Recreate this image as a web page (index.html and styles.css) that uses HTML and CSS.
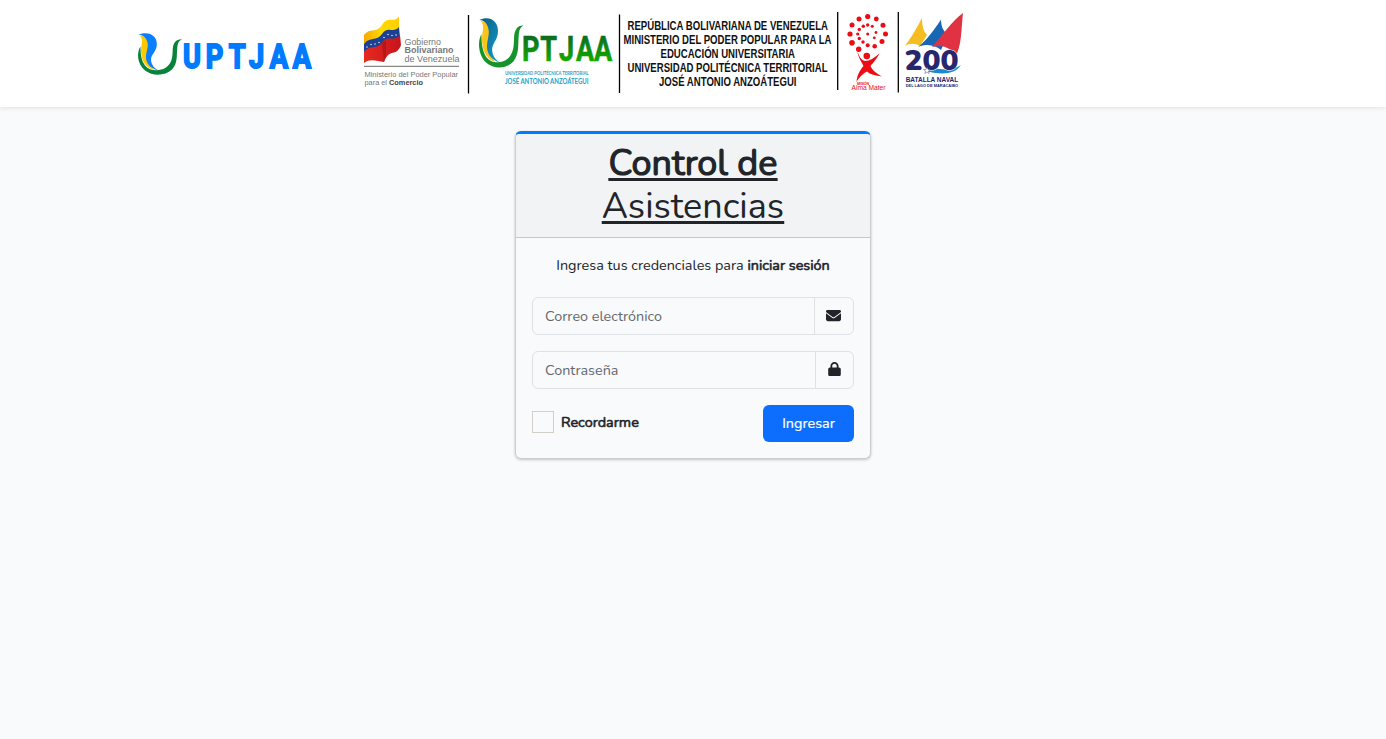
FILE: index.html
```
<!DOCTYPE html>
<html lang="es">
<head>
<meta charset="utf-8">
<title>Control de Asistencias</title>
<link rel="stylesheet" href="styles.css">
</head>
<body>
<header class="topbar">
  <svg class="brand" viewBox="136 30 180 50" role="img" aria-label="UPTJAA">
    <defs>
      <g id="swoosh">
        <path class="swoosh-leaf" d="M140.500 46.500C136.500 52 137 64 145 70.500C153 76.500 165 76 172 69.500C178 63 176.500 55 177.200 49C177.700 43 178.500 41 182 39.300C176 39 173.200 43 172.700 49C172.500 58 172 63 166 67.500C160 71.500 150 71.500 145 65.500C141 60 140.500 53 140.500 46.500Z"/>
        <path class="swoosh-sun" d="M139.500 35.500C145 39 139.500 47 141.500 55C142.500 63 147 68 154 70C148 63 147 58 148 52C150 43 148 36 139.500 35.500Z"/>
        <path class="swoosh-water" d="M138.300 34.800C149 30.500 157.500 36 156.800 45C156.300 52 151 54 151 60C151.500 65 154 68 158.500 70.500C149 68 145.500 62 146 56C146.500 50 149 46 147 41C145.500 37 142 34.500 138.300 34.800Z"/>
      </g>
    </defs>
    <use href="#swoosh" class="mark"/>
    <text class="brand-text" transform="scale(.8 1)" x="228.900 257.300 286 311.300 337.300 365.800" y="68">UPTJAA</text>
  </svg>
  <svg class="banner" viewBox="362 8 606 90" role="img" aria-label="Instituciones">
    <defs>
      <linearGradient id="gy" x1="0" x2="1"><stop offset="0" stop-color="#f6a800"/><stop offset=".5" stop-color="#ffd900"/><stop offset="1" stop-color="#ffcf00"/></linearGradient>
      <linearGradient id="gr" x1="0" x2="1"><stop offset="0" stop-color="#e52a20"/><stop offset="1" stop-color="#c8131b"/></linearGradient>
      <linearGradient id="gg" gradientUnits="userSpaceOnUse" x1="0" x2="0" y1="35" y2="61"><stop offset="0" stop-color="#0b6b22"/><stop offset="1" stop-color="#12a800"/></linearGradient>
      <linearGradient id="gw" x1="0" x2="1" y1="0" y2="1"><stop offset="0" stop-color="#0b5a80"/><stop offset="1" stop-color="#14a0d0"/></linearGradient>
    </defs>
    <!-- Gobierno Bolivariano -->
    <path fill="url(#gy)" d="M364 35C370 27 376 34 382 25C388 15 393 24 399 16.500V29C392 37 388 27 382 37C376 45 370 38 364 45Z"/>
    <path fill="#1b4194" d="M364 44C370 36 376 42 382 34C388 25 393 34 399 27L400 37C393 46 388 36 382 46C376 53 370 45 364 53Z"/>
    <path fill="url(#gr)" d="M364 52C370 44 376 50 382 43C388 34 393 43 400 35L401 45C396 58 390 47 384 62C377 61 370 58 364 63Z"/>
    <path fill="#98151b" d="M382 43L386 40V56L384 62Z" opacity=".6"/>
    <g fill="#fff"><circle cx="367" cy="47" r=".7"/><circle cx="371" cy="44.500" r=".7"/><circle cx="375" cy="44" r=".7"/><circle cx="379" cy="42.500" r=".7"/><circle cx="384" cy="37.500" r=".7"/><circle cx="388" cy="34.500" r=".7"/><circle cx="392" cy="35.500" r=".7"/><circle cx="396" cy="35" r=".7"/></g>
    <g class="gov">
      <text x="404.500" y="45" font-size="9.500" textLength="36.500" lengthAdjust="spacingAndGlyphs">Gobierno</text>
      <text x="404.500" y="53.300" font-size="9.500" font-weight="700" textLength="49" lengthAdjust="spacingAndGlyphs">Bolivariano</text>
      <text x="404.500" y="62" font-size="9.500" textLength="55" lengthAdjust="spacingAndGlyphs">de Venezuela</text>
      <text x="364.500" y="76.500" font-size="8" textLength="93.500" lengthAdjust="spacingAndGlyphs">Ministerio del Poder Popular</text>
      <text x="364.500" y="85" font-size="8" textLength="58.500" lengthAdjust="spacingAndGlyphs">para el <tspan font-weight="700" fill="#444">Comercio</tspan></text>
    </g>
    <path stroke="#888" stroke-width="1.200" d="M364 66.400H459"/>
    <path class="divider" d="M468.500 15V93.500M619.500 14.500V93M837.700 12V90M898.300 12V92.500"/>
    <!-- UPTJAA -->
    <use href="#swoosh" class="mark-green" transform="translate(339.300 -21.300) scale(1.012 1.190)"/>
    <text class="uni" transform="scale(.77 1)" x="678 701.500 726 748 771.300" y="60.700" fill="url(#gg)">PTJAA</text>
    <g class="uni-sub">
      <text x="505" y="75.300" font-size="5.200" textLength="83.500" lengthAdjust="spacingAndGlyphs">UNIVERSIDAD POLITÉCNICA TERRITORIAL</text>
      <text x="505" y="83.500" font-size="6.800" textLength="83.500" lengthAdjust="spacingAndGlyphs">JOSÉ ANTONIO ANZOÁTEGUI</text>
    </g>
    <g class="ministry">
      <text x="627.500" y="30.200" textLength="200.500" lengthAdjust="spacingAndGlyphs">REPÚBLICA BOLIVARIANA DE VENEZUELA</text>
      <text x="623.500" y="44.300" textLength="208" lengthAdjust="spacingAndGlyphs">MINISTERIO DEL PODER POPULAR PARA LA</text>
      <text x="660.500" y="58.200" textLength="134.500" lengthAdjust="spacingAndGlyphs">EDUCACIÓN UNIVERSITARIA</text>
      <text x="627.500" y="72.200" textLength="200" lengthAdjust="spacingAndGlyphs">UNIVERSIDAD POLITÉCNICA TERRITORIAL</text>
      <text x="659" y="86.200" textLength="137.500" lengthAdjust="spacingAndGlyphs">JOSÉ ANTONIO ANZOÁTEGUI</text>
    </g>
    <!-- Alma Mater -->
    <g class="alma">
      <circle cx="867.700" cy="16.500" r="2.600"/><circle cx="876.300" cy="19" r="2.400"/><circle cx="883" cy="25.300" r="2.500"/><circle cx="885.500" cy="34" r="2.500"/><circle cx="882" cy="41.500" r="2.500"/><circle cx="874.700" cy="46.300" r="2.300"/><circle cx="867.700" cy="45.300" r="2"/><circle cx="852" cy="42.700" r="2.800"/><circle cx="850" cy="34" r="2.600"/><circle cx="852" cy="25" r="2.500"/><circle cx="859" cy="19" r="2.500"/><circle cx="858.700" cy="49.300" r="2.700"/>
      <circle cx="867.700" cy="25" r="1.700"/><circle cx="872.300" cy="26.300" r="1.500"/><circle cx="863.300" cy="26.300" r="1.700"/><circle cx="859.300" cy="29.500" r="1.700"/><circle cx="857.700" cy="34" r="1.600"/><circle cx="859.300" cy="38.500" r="1.700"/><circle cx="863" cy="42" r="1.700"/><circle cx="867.700" cy="34" r="1.500"/><circle cx="874.300" cy="37.800" r="1.400"/><circle cx="876" cy="32.500" r="1.400"/>
      <circle cx="866.800" cy="56" r="3.300"/>
      <path d="M857 50.500C859 56 861 60 865 61C870 61 874 58 879.500 53.500C876 60 873 63 870.500 66C872 70 876 73 882 76.500C876 75.500 870 74.500 867 71.500C864 73 859 77 856.500 82C857 75 860 70 863.500 66C861.500 62 858 57 857 50.500Z"/>
      <text x="857" y="85" font-size="3.500" font-weight="700" textLength="12">MISIÓN</text>
      <text x="851.500" y="90" font-size="6.300" textLength="34" lengthAdjust="spacingAndGlyphs">Alma Mater</text>
    </g>
    <!-- Batalla Naval -->
    <path fill="#f5bd22" d="M922 18C916 29 911 38 905 46C910 43 915 43 920 46L927 35C923 31 922 24 922 18Z"/>
    <path fill="#1768b3" d="M941 19.500C934 30 927 40 918 47C928 43 936 46 941 50L948 35C943 31 941 26 941 19.500Z"/>
    <path fill="#e03243" d="M963 13C951 22 942 36 932 47C944 44 951 48 955 57C962 46 961 30 963 13Z"/>
    <path fill="#1e88cf" d="M925 71C935 64 945 75 961 65C953 77 936 73 930 72Z"/>
    <text class="two" x="904.500" y="70" textLength="54" lengthAdjust="spacingAndGlyphs">200</text>
    <path fill="#fff" stroke="#26276d" stroke-width=".4" d="M927 67L928 69.500H930.500L928.500 71L929.200 73.500L927 72L924.800 73.500L925.500 71L923.500 69.500H926Z"/>
    <g class="naval">
      <text x="905.700" y="82" font-size="6.300" textLength="52.500" lengthAdjust="spacingAndGlyphs">BATALLA NAVAL</text>
      <text x="905.700" y="87.300" font-size="3.600" textLength="52.500" lengthAdjust="spacingAndGlyphs">DEL LAGO DE MARACAIBO</text>
    </g>
  </svg>
</header>
<main class="page">
  <section class="card">
    <div class="card-header"><h1 class="title"><b>Control de</b><span>Asistencias</span></h1></div>
    <form class="card-body">
      <p class="intro">Ingresa tus credenciales para <b>iniciar sesión</b></p>
      <div class="field">
        <input class="control" type="email" placeholder="Correo electrónico">
        <span class="addon addon-mail"><svg width="15" height="15" viewBox="0 0 512 512"><path fill="currentColor" d="M48 64C21.500 64 0 85.500 0 112c0 15.100 7.100 29.300 19.200 38.400L236.800 313.600c11.400 8.500 27 8.500 38.400 0L492.800 150.400c12.100-9.100 19.200-23.300 19.200-38.400 0-26.500-21.500-48-48-48H48zM0 176V384c0 35.300 28.700 64 64 64H448c35.300 0 64-28.700 64-64V176L294.400 339.200c-22.800 17.100-54 17.100-76.800 0L0 176z"/></svg></span>
      </div>
      <div class="field">
        <input class="control" type="password" placeholder="Contraseña">
        <span class="addon"><svg width="13" height="14.400" viewBox="0 0 448 512"><path fill="currentColor" d="M144 144v48H304V144c0-44.200-35.800-80-80-80s-80 35.800-80 80zM80 192V144C80 64.500 144.500 0 224 0s144 64.500 144 144v48h16c35.300 0 64 28.700 64 64V448c0 35.300-28.700 64-64 64H64c-35.300 0-64-28.700-64-64V256c0-35.300 28.700-64 64-64H80z"/></svg></span>
      </div>
      <div class="actions">
        <label class="remember"><input class="check" type="checkbox"><span class="remember-text">Recordarme</span></label>
        <button class="submit" type="button">Ingresar</button>
      </div>
    </form>
  </section>
</main>
</body>
</html>
```
FILE: styles.css
```
* { box-sizing: border-box; }
body {
  margin: 0;
  min-height: 100vh;
  background: #f8fafc;
  color: #212529;
  font: 400 14.4px/1.6 Nunito, sans-serif;
}
.topbar {
  display: flex;
  align-items: flex-start;
  gap: 46px;
  height: 107px;
  padding: 8px 0 0 136px;
  background: #fff;
  box-shadow: 0 2px 4px rgba(0, 0, 0, .075);
}
.brand { width: 180px; height: 50px; margin-top: 22px; }
.banner { width: 606px; height: 90px; }
.swoosh-leaf { fill: var(--leaf); }
.swoosh-sun { fill: var(--sun); }
.swoosh-water { fill: var(--water); }
.mark { --leaf: #07843a; --sun: #ffc800; --water: #0a80ff; }
.mark-green { --leaf: #17932b; --sun: #f9c51d; --water: url(#gw); }
.brand-text { font: 700 34px Roboto, sans-serif; fill: #007bff; stroke: #007bff; stroke-width: 2; }
.gov { font-family: "Liberation Sans", sans-serif; fill: #777; }
.divider { stroke: #000; stroke-width: 1.300; fill: none; }
.uni { font: 700 35.200px Roboto, sans-serif; stroke: url(#gg); stroke-width: .6; }
.uni-sub { font-family: Lato, sans-serif; font-weight: 700; fill: #1ba3ca; }
.ministry { font: 700 12px "Liberation Sans", sans-serif; fill: #111; }
.alma { font-family: "Liberation Sans", sans-serif; fill: #ec0c16; }
.two {
  font: 900 27px Nunito, sans-serif;
  fill: #26276d;
  stroke: #fff;
  stroke-width: 1;
  paint-order: stroke;
}
.naval { font-family: "Liberation Sans", sans-serif; font-weight: 700; fill: #26276d; }
.page { display: flex; justify-content: center; padding-top: 24px; }
.card {
  width: 356px;
  height: 328px;
  border: 1px solid #cbced1;
  border-top: 3px solid #007bff;
  border-radius: 6px;
  box-shadow: 0 0 1px rgba(0, 0, 0, .125), 0 1px 3px rgba(0, 0, 0, .2);
}
.card-header {
  height: 104px;
  padding-top: 8px;
  background: #f1f3f5;
  border-bottom: 1px solid #c5c8ca;
  border-radius: 3px 3px 0 0;
}
.title {
  display: flex;
  flex-direction: column;
  align-items: center;
  margin: 0;
  font-size: 36px;
  font-weight: 400;
  line-height: 43px;
  text-decoration: underline;
  text-decoration-thickness: 3px;
  text-underline-offset: 3px;
  text-decoration-skip-ink: none;
}
.title b { text-decoration: inherit; -webkit-text-stroke: 1.2px currentColor; }
.title span { text-decoration: inherit; }
/* Emboldened regular weight keeps the regular advance widths. */
b, .remember-text { font-weight: 400; -webkit-text-stroke: .6px currentColor; }
.card-body { padding: 16px; }
.intro { height: 23px; margin: 0 0 20px; text-align: center; white-space: nowrap; }
.field {
  display: flex;
  height: 38px;
  margin-bottom: 16px;
  border: 1px solid #dee2e6;
  border-radius: 6px;
}
.control {
  flex: 1;
  min-width: 0;
  padding: 2px 12px 0;
  border: 0;
  outline: 0;
  background: transparent;
  font: inherit;
}
.control::placeholder { color: #65696e; opacity: 1; }
.addon {
  display: flex;
  align-items: center;
  justify-content: center;
  width: 38px;
  padding-bottom: 2px;
  border-left: 1px solid #dee2e6;
}
.addon-mail { width: 39px; padding-right: 1px; }
.actions { display: flex; justify-content: space-between; }
.remember { display: flex; align-items: center; gap: 7px; height: 34px; }
.remember-text { padding-top: 2px; }
.check {
  appearance: none;
  width: 22px;
  height: 22px;
  margin: 0;
  border: 1px solid #d3cfc8;
}
.submit {
  width: 91px;
  height: 37px;
  padding: 0;
  border: 0;
  border-radius: 6px;
  background: #0d6efd;
  color: #fff;
  font: inherit;
  -webkit-text-stroke: .2px currentColor;
}
```
